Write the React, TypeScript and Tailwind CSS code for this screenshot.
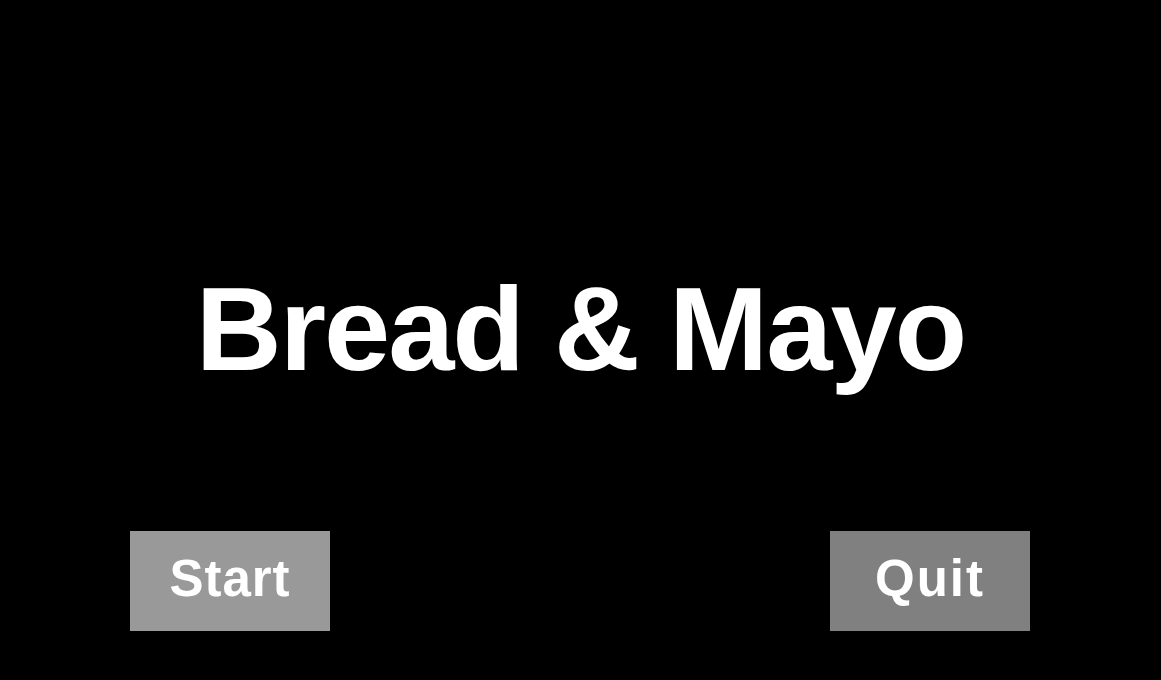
export default function App() {
  return (
    <div
      className="h-[680px] w-full bg-black text-white flex flex-col"
      style={{ fontFamily: '"Liberation Sans", Arial, sans-serif' }}
    >
      <h1 className="mt-[269px] text-center text-[119px] font-bold leading-none tracking-[-2px]">Bread &amp; Mayo</h1>
      <div className="mt-auto mb-[49px] pl-[130px] pr-[131px] flex justify-between">
        <button className="w-[200px] h-[100px] pb-[4px] bg-[#999999] text-white text-[51px] font-bold tracking-[1px] flex items-center justify-center">
          Start
        </button>
        <button className="w-[200px] h-[100px] pb-[4px] bg-[#808080] text-white text-[51px] font-bold tracking-[2px] flex items-center justify-center">
          Quit
        </button>
      </div>
    </div>
  );
}
